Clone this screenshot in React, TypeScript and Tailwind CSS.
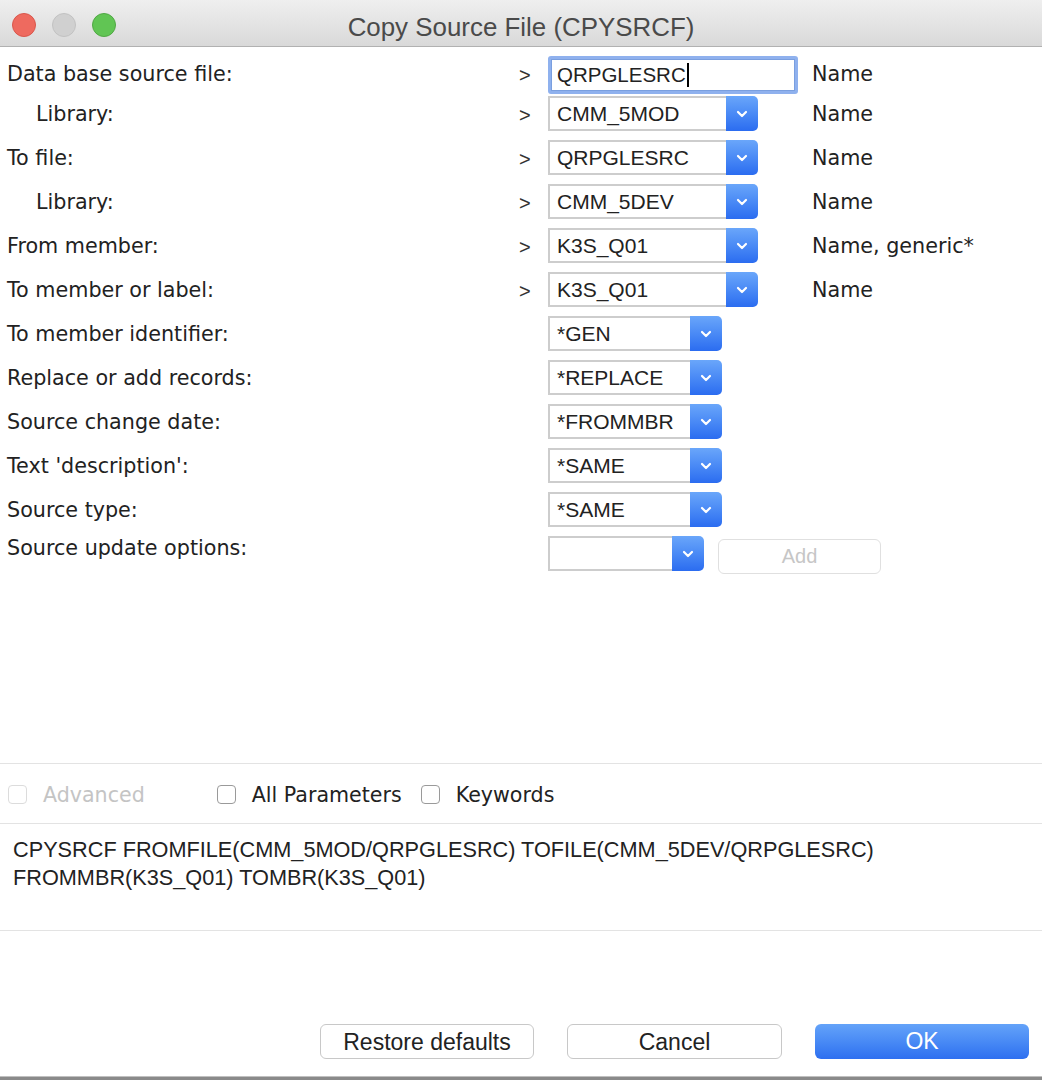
import React from "react";

const labelFont = "font-['DejaVu_Sans',sans-serif]";
const fieldFont = "font-['Liberation_Sans',Arial,sans-serif]";

function Chevron() {
    return (
        <svg width="12" height="8" viewBox="0 0 12 8" fill="none">
            <path d="M2 2 L6 6 L10 2" stroke="white" strokeWidth="2.2" strokeLinecap="round" strokeLinejoin="round" />
        </svg>
    );
}

function Combo({ value, width }: { value: string; width: string }) {
    return (
        <div className={`flex h-[35px] ${width}`}>
            <div className={`flex-1 flex items-center border-2 border-r-0 border-[#cdcdcd] bg-white pl-[7px] text-[21px] text-[#222] ${fieldFont}`}>
                {value}
            </div>
            <div className="w-[32px] flex items-center justify-center rounded-r-[5px] bg-gradient-to-b from-[#6aa6fa] to-[#2b6cf0]">
                <Chevron />
            </div>
        </div>
    );
}

interface Row {
    label: string;
    indent?: boolean;
    marker?: boolean;
    value: string;
    note?: string;
    kind: "long" | "short";
}

const rows: Row[] = [
    { label: "Library:", indent: true, marker: true, value: "CMM_5MOD", note: "Name", kind: "long" },
    { label: "To file:", marker: true, value: "QRPGLESRC", note: "Name", kind: "long" },
    { label: "Library:", indent: true, marker: true, value: "CMM_5DEV", note: "Name", kind: "long" },
    { label: "From member:", marker: true, value: "K3S_Q01", note: "Name, generic*", kind: "long" },
    { label: "To member or label:", marker: true, value: "K3S_Q01", note: "Name", kind: "long" },
    { label: "To member identifier:", value: "*GEN", kind: "short" },
    { label: "Replace or add records:", value: "*REPLACE", kind: "short" },
    { label: "Source change date:", value: "*FROMMBR", kind: "short" },
    { label: "Text 'description':", value: "*SAME", kind: "short" },
    { label: "Source type:", value: "*SAME", kind: "short" },
];

function Checkbox({ label, disabled }: { label: string; disabled?: boolean }) {
    return (
        <div className="flex items-center gap-[16px]">
            <div className={`w-[19px] h-[19px] rounded-[4px] border bg-white ${disabled ? "border-[#dcdcdc]" : "border-[#9a9a9a]"}`} />
            <span className={`${labelFont} text-[20.6px] ${disabled ? "text-[#c4c4c4]" : "text-[#222]"}`}>{label}</span>
        </div>
    );
}

export default function App() {
    return (
        <div className="w-[1042px] h-[1080px] bg-white flex flex-col overflow-hidden">
            {/* Title bar */}
            <div className="h-[47px] shrink-0 flex items-center relative bg-gradient-to-b from-[#efefef] to-[#d9d9d9] border-b border-[#b1b1b1]">
                <div className="flex gap-[16px] pl-[12px] pt-[4px]">
                    <div className="w-[24px] h-[24px] rounded-full bg-[#ee6a5f] border border-[#d9574c]" />
                    <div className="w-[24px] h-[24px] rounded-full bg-[#d0d0d0] border border-[#c2c2c2]" />
                    <div className="w-[24px] h-[24px] rounded-full bg-[#61c554] border border-[#51a845]" />
                </div>
                <div className={`absolute inset-0 flex items-center justify-center pt-[9px] text-[25.9px] text-[#4a4a4a] ${fieldFont}`}>
                    Copy Source File (CPYSRCF)
                </div>
            </div>

            {/* Parameters */}
            <div className="h-[716px] shrink-0 flex flex-col pt-[9px] gap-[9px]">
                <div className="flex items-center h-[38px] mb-[-7px]">
                    <div className={`w-[514px] pl-[7px] text-[20.7px] text-[#222] ${labelFont}`}>Data base source file:</div>
                    <div className={`w-[34px] pl-[5px] text-[20px] text-[#333] ${fieldFont}`}>&gt;</div>
                    <div className="w-[264px]">
                        <div className="w-[250px] h-[38px] rounded-[3px] border-[3px] border-[#8fb1ee] flex">
                            <div className={`flex-1 flex items-center border border-[#7a9fdf] bg-white pl-[5px] text-[20.5px] text-[#222] ${fieldFont}`}>
                                QRPGLESRC
                                <span className="w-[2px] h-[24px] bg-black ml-[1px]" />
                            </div>
                        </div>
                    </div>
                    <div className={`text-[20.7px] text-[#222] ${labelFont}`}>Name</div>
                </div>

                {rows.map((r, i) => (
                    <div key={i} className="flex items-center h-[35px]">
                        <div className={`w-[514px] pt-[2px] text-[20.7px] text-[#222] ${labelFont} ${r.indent ? "pl-[36px]" : "pl-[7px]"}`}>{r.label}</div>
                        <div className={`w-[34px] pl-[5px] pt-[2px] text-[20px] text-[#333] ${fieldFont}`}>{r.marker ? ">" : ""}</div>
                        <div className="w-[264px]">
                            <Combo value={r.value} width={r.kind === "long" ? "w-[210px]" : "w-[174px]"} />
                        </div>
                        {r.note && <div className={`pt-[2px] text-[20.7px] text-[#222] ${labelFont}`}>{r.note}</div>}
                    </div>
                ))}

                <div className="flex items-center h-[35px]">
                    <div className={`w-[514px] pl-[7px] pb-[10px] text-[20.7px] text-[#222] ${labelFont}`}>Source update options:</div>
                    <div className="w-[34px]" />
                    <Combo value="" width="w-[156px]" />
                    <div className={`ml-[14px] mt-[5px] w-[163px] h-[35px] rounded-[6px] border border-[#e0e0e0] bg-white flex items-center justify-center text-[20px] text-[#c6c6c6] ${fieldFont}`}>
                        Add
                    </div>
                </div>
            </div>

            <div className="h-px shrink-0 bg-[#e3e3e3]" />
            <div className="h-[59px] shrink-0 flex items-center pl-[8px] pt-[3px]">
                <Checkbox label="Advanced" disabled />
                <div className="ml-[72px]">
                    <Checkbox label="All Parameters" />
                </div>
                <div className="ml-[19px]">
                    <Checkbox label="Keywords" />
                </div>
            </div>
            <div className="h-px shrink-0 bg-[#e3e3e3]" />

            {/* Command string */}
            <div className={`h-[106px] shrink-0 pt-[12px] pl-[13px] text-[21.7px] leading-[28px] text-[#222] ${fieldFont}`}>
                <div>CPYSRCF FROMFILE(CMM_5MOD/QRPGLESRC) TOFILE(CMM_5DEV/QRPGLESRC)</div>
                <div>FROMMBR(K3S_Q01) TOMBR(K3S_Q01)</div>
            </div>
            <div className="h-px shrink-0 bg-[#e3e3e3]" />

            {/* Buttons */}
            <div className="flex-1 flex items-end justify-end gap-[33px] pr-[13px] pb-[17px]">
                <button className={`w-[214px] h-[35px] rounded-[6px] border border-[#c8c8c8] bg-white text-[23px] text-[#222] ${fieldFont}`}>Restore defaults</button>
                <button className={`w-[215px] h-[35px] rounded-[6px] border border-[#c8c8c8] bg-white text-[23px] text-[#222] ${fieldFont}`}>Cancel</button>
                <button className={`w-[214px] h-[35px] rounded-[6px] bg-gradient-to-b from-[#64a3f9] to-[#2e6ff0] text-[23px] text-white ${fieldFont}`}>OK</button>
            </div>
            <div className="h-[4px] shrink-0 bg-[#8a8a8a] border-t border-[#c0c0c0]" />
        </div>
    );
}
